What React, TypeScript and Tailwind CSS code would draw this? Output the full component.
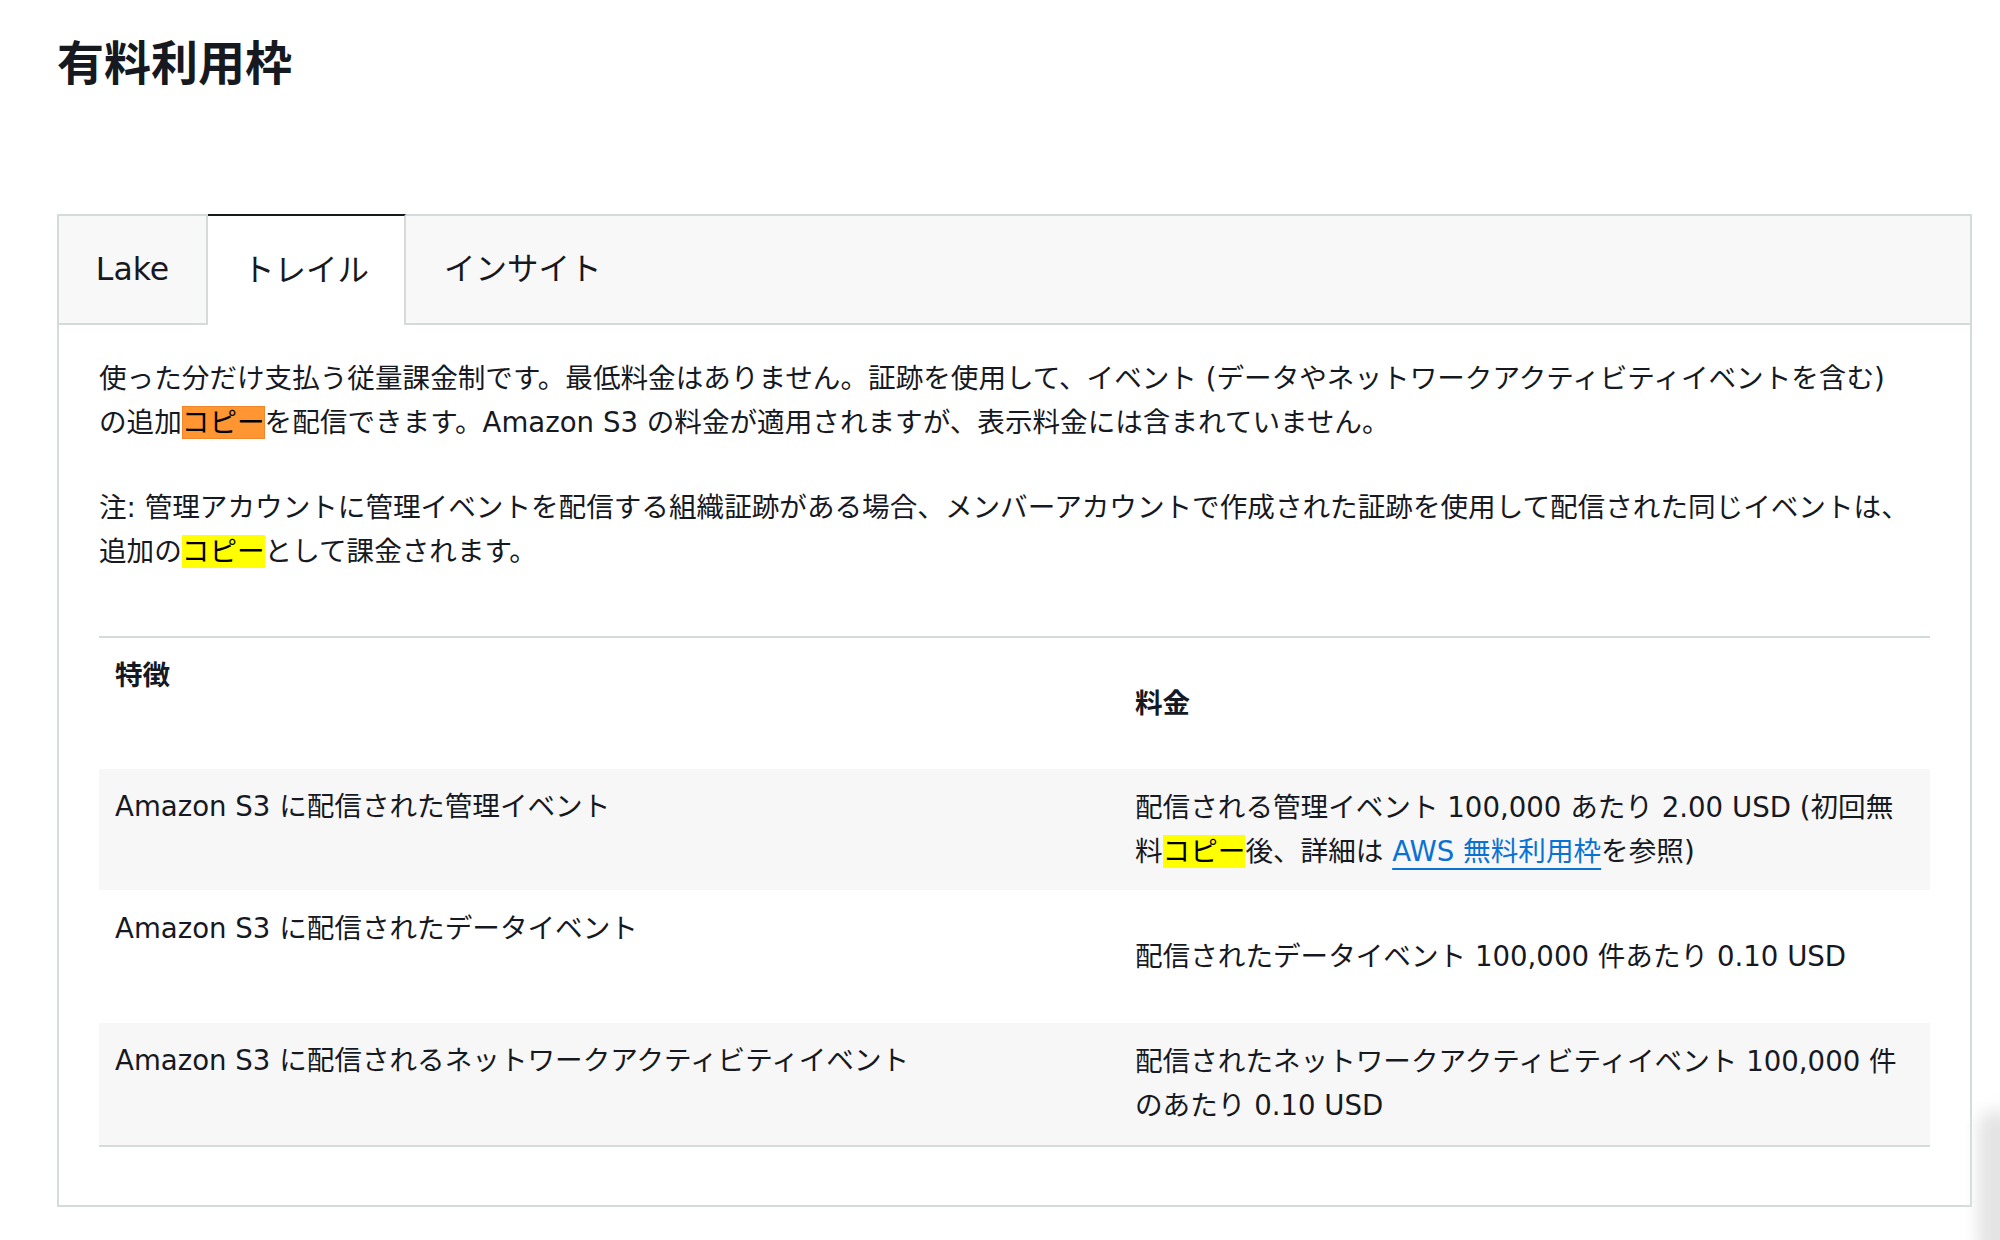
import React from "react"

const FONT = "font-['DejaVu_Sans','Noto_Sans_CJK_JP',sans-serif]"

const TABS = [
  { label: "Lake", active: false },
  { label: "トレイル", active: true },
  { label: "インサイト", active: false },
]

function Hl({ children, current }: { children: React.ReactNode; current?: boolean }) {
  return (
    <mark className={current ? "bg-[#ff9632] text-black shadow-[inset_0_0_0_1px_#f2862a]" : "bg-[#ffff00] text-black"}>
      {children}
    </mark>
  )
}

interface Row {
  feature: string
  price: React.ReactNode
  height: string
  shaded: boolean
  pt: string
}

const ROWS: Row[] = [
  {
    feature: "Amazon S3 に配信された管理イベント",
    price: (
      <>
        配信される管理イベント 100,000 あたり 2.00 USD (初回無料<Hl>コピー</Hl>後、詳細は{" "}
        <a className="text-[#0972d3] underline decoration-2 underline-offset-[7px]">AWS 無料利用枠</a>を参照)
      </>
    ),
    height: "h-[121px]",
    shaded: true,
    pt: "pt-[16px]",
  },
  {
    feature: "Amazon S3 に配信されたデータイベント",
    price: "配信されたデータイベント 100,000 件あたり 0.10 USD",
    height: "h-[133px]",
    shaded: false,
    pt: "pt-[17px]",
  },
  {
    feature: "Amazon S3 に配信されるネットワークアクティビティイベント",
    price: "配信されたネットワークアクティビティイベント 100,000 件のあたり 0.10 USD",
    height: "h-[122px]",
    shaded: true,
    pt: "pt-[16px]",
  },
]

export default function App() {
  return (
    <div className={`relative min-h-screen overflow-hidden bg-white text-[#16191f] ${FONT}`}>
      <div className="pl-[57px] pr-[28px]">
        <h1 className="pt-[36px] text-[47px] font-bold leading-[56px] text-[#16191f]">有料利用枠</h1>

        <div className="mt-[122px] border-2 border-[#d5dbdb]">
          {/* tab bar */}
          <div className="flex h-[109px] bg-[#f8f8f8]">
            {TABS.map(t =>
              t.active ? (
                <div
                  key={t.label}
                  className="-mt-[2px] flex h-[111px] w-[198px] items-center justify-center border-t-2 border-r-2 border-t-[#16191f] border-r-[#d5dbdb] bg-white text-[31.5px]"
                >
                  {t.label}
                </div>
              ) : (
                <div
                  key={t.label}
                  className={`flex items-center justify-center border-b-2 border-[#d5dbdb] px-[38px] text-[31.5px] ${t.label === "Lake" ? "w-[149px] border-r-2" : ""}`}
                >
                  {t.label}
                </div>
              )
            )}
            <div className="flex-1 border-b-2 border-[#d5dbdb]" />
          </div>

          {/* panel */}
          <div className="px-[40px] pt-[32px] pb-[58px] text-[27.6px] leading-[44px]">
            <p className="pr-[16px]">
              使った分だけ支払う従量課金制です。最低料金はありません。証跡を使用して、イベント (データやネットワークアクティビティイベントを含む) の追加
              <Hl current>コピー</Hl>を配信できます。Amazon S3 の料金が適用されますが、表示料金には含まれていません。
            </p>
            <p className="mt-[41px] pr-[16px]">
              注: 管理アカウントに管理イベントを配信する組織証跡がある場合、メンバーアカウントで作成された証跡を使用して配信された同じイベントは、追加の
              <Hl>コピー</Hl>として課金されます。
            </p>

            <div className="mt-[62px] border-t-2 border-b-2 border-[#d5dbdb]">
              <div className="grid h-[131px] grid-cols-[1020px_1fr]">
                <div className="self-start px-[16px] pt-[16px] font-bold">特徴</div>
                <div className="self-center px-[16px] font-bold">料金</div>
              </div>
              {ROWS.map(r => (
                <div
                  key={r.feature}
                  className={`grid grid-cols-[1020px_1fr] ${r.height} ${r.shaded ? "bg-[#f7f7f7]" : "bg-white"}`}
                >
                  <div className={`self-start px-[16px] ${r.pt}`}>{r.feature}</div>
                  <div className="self-center pl-[16px] pr-[14px]">{r.price}</div>
                </div>
              ))}
            </div>
          </div>
        </div>
      </div>

      <div className="absolute right-[-14px] bottom-[-20px] h-[150px] w-[36px] rounded-full bg-[#e4e4e4] blur-[8px]" />
    </div>
  )
}
